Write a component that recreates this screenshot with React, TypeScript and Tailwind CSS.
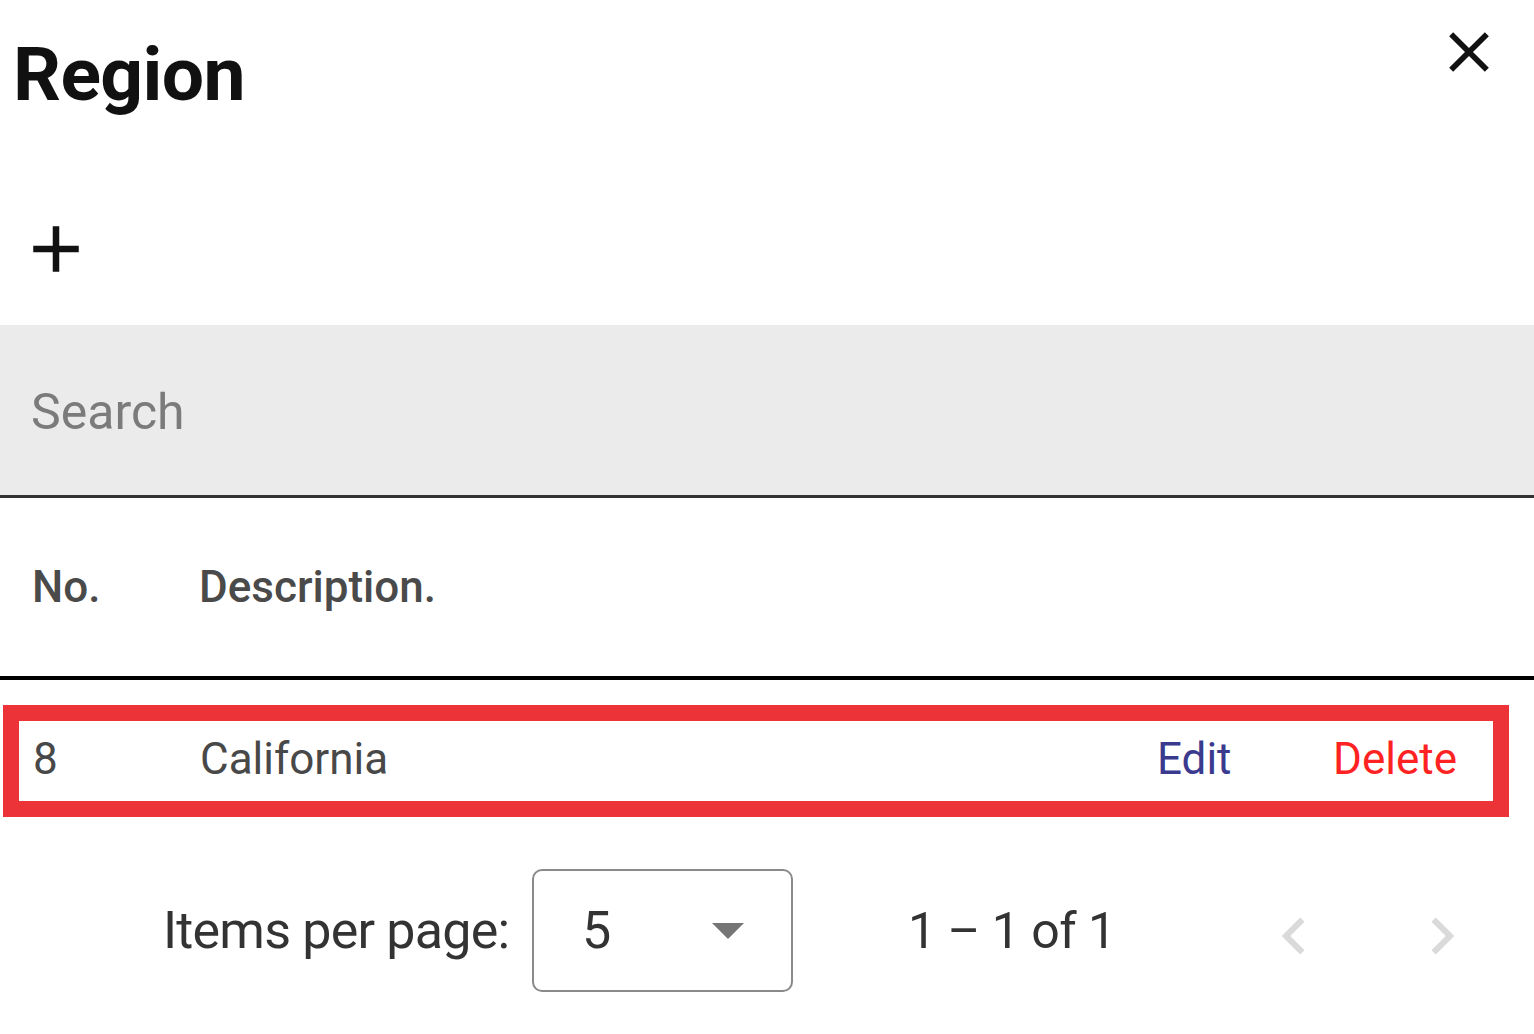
import { useState } from 'react'

const rows = [{ id: 8, description: 'California' }]

export default function App() {
  const [search, setSearch] = useState('')

  return (
    <div className="w-[1534px] h-[1034px] bg-white overflow-hidden font-['Roboto',sans-serif] text-[#222]">
      {/* Title */}
      <div className="h-[150px] flex justify-between items-start pl-[13px] pr-[31px]">
        <h1 className="pt-[37px] text-[75px] leading-[75px] font-bold text-[#111] tracking-[-0.6px]">Region</h1>
        <button className="mt-[18px] w-[68px] h-[68px] text-[#111]">
          <svg viewBox="0 0 24 24" className="w-[68px] h-[68px]" fill="currentColor">
            <path d="M19 6.41L17.59 5 12 10.59 6.41 5 5 6.41 10.59 12 5 17.59 6.41 19 12 13.41 17.59 19 19 17.59 13.41 12z" />
          </svg>
        </button>
      </div>

      {/* Add */}
      <div className="h-[175px] pl-[17px] pt-[60px]">
        <button className="w-[78px] h-[78px] text-[#111]">
          <svg viewBox="0 0 24 24" className="w-[78px] h-[78px]" fill="currentColor">
            <path d="M19 13h-6v6h-2v-6H5v-2h6V5h2v6h6v2z" />
          </svg>
        </button>
      </div>

      {/* Search */}
      <div className="h-[173px] bg-[#ebebeb] border-b-[3px] border-[#333]">
        <input
          value={search}
          onChange={(e) => setSearch(e.target.value)}
          placeholder="Search"
          className="w-full h-full px-[31px] pt-[4px] bg-transparent outline-none text-[50px] text-[#333] placeholder:text-[#7b7b7b]"
        />
      </div>

      {/* Header */}
      <div className="h-[182px] border-b-4 border-black flex items-center pl-[32px] text-[44px] leading-[44px] font-medium text-[#4a4a4a]">
        <div className="w-[167px]">No.</div>
        <div>Description.</div>
      </div>

      {/* Rows */}
      <div className="pt-[25px]">
        {rows.map((row) => (
          <div
            key={row.id}
            className="ml-[3px] w-[1506px] h-[112px] border-[16px] border-[#eb3338] flex items-center pb-[4px] pl-[14px] text-[44px] leading-[44px] text-[#484848]"
          >
            <div className="w-[167px]">{row.id}</div>
            <div className="flex-1">{row.description}</div>
            <button className="w-[176px] text-left text-[#3a3a8e]">Edit</button>
            <button className="w-[160px] text-left text-[#ff2222]">Delete</button>
          </div>
        ))}
      </div>

      {/* Pagination */}
      <div className="mt-[52px] flex items-center pl-[163px] text-[52px] leading-[52px] text-[#333]">
        <span className="w-[344px] shrink-0 whitespace-nowrap tracking-[-0.8px]">Items per page:</span>
        <div className="ml-[25px] w-[261px] h-[123px] border-2 border-[#8a8a8a] rounded-[10px] flex items-center justify-between pl-[48px] pr-[47px]">
          <span>5</span>
          <svg viewBox="0 0 32 16" className="w-[32px] h-[16px]" fill="#757575">
            <path d="M0 0h32L16 16z" />
          </svg>
        </div>
        <span className="ml-[115px] w-[205px] shrink-0 whitespace-nowrap text-[50px] tracking-[-0.5px]">1 – 1 of 1</span>
        <div className="ml-[144px] mt-[10px] flex items-center gap-[74px] text-[#dadada]">
          <svg viewBox="0 0 24 24" className="w-[74px] h-[74px]" fill="currentColor">
            <path d="M15.41 7.41L14 6l-6 6 6 6 1.41-1.41L10.83 12z" />
          </svg>
          <svg viewBox="0 0 24 24" className="w-[74px] h-[74px]" fill="currentColor">
            <path d="M10 6L8.59 7.41 13.17 12l-4.58 4.59L10 18l6-6z" />
          </svg>
        </div>
      </div>
    </div>
  )
}
